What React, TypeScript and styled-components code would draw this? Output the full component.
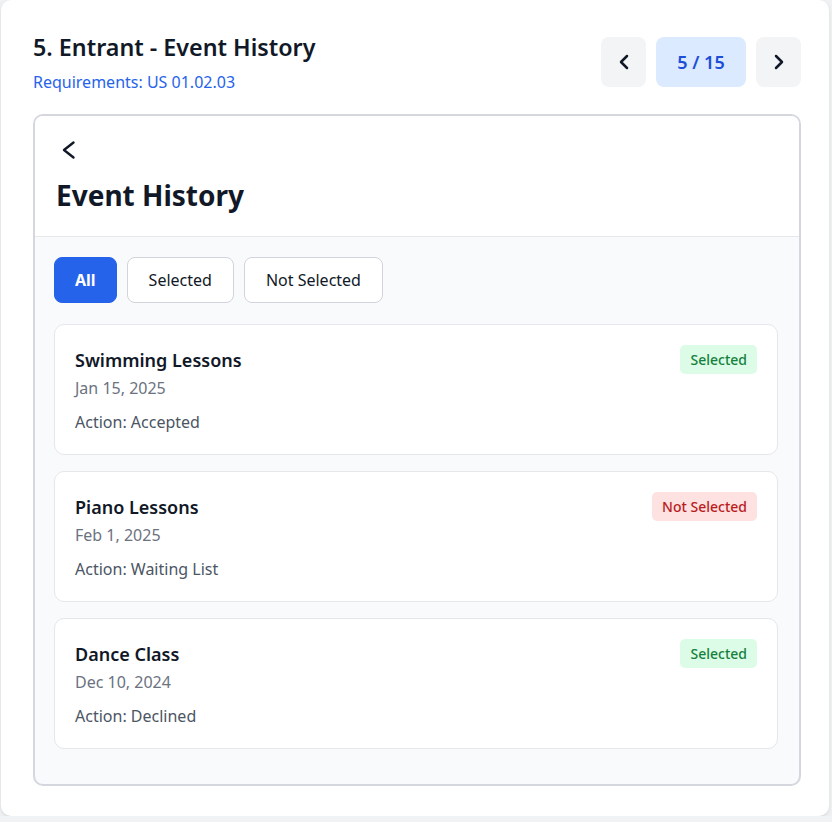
import styled, { createGlobalStyle } from "styled-components";

const GlobalStyle = createGlobalStyle`
  html, body {
    margin: 0;
    padding: 0;
    background: #f1f2f4;
  }
  body {
    font-family: "Noto Sans", "Open Sans", sans-serif;
    color: #111827;
  }
  * {
    box-sizing: border-box;
  }
`;

const Sheet = styled.div`
  width: 828px;
  height: 816px;
  margin-left: 1px;
  padding: 31px 28px 30px 32px;
  background: #ffffff;
  border-radius: 10px;
  box-shadow: 0 2px 6px rgba(0, 0, 0, 0.08), 0 1px 2px rgba(0, 0, 0, 0.05);
`;

const TopBar = styled.div`
  display: flex;
  justify-content: space-between;
  align-items: flex-start;
  margin-bottom: 20px;
`;

const Heading = styled.h1`
  margin: 0;
  font-size: 23.3px;
  line-height: 32px;
  font-weight: 600;
  color: #111827;
`;

const Requirements = styled.div`
  margin-top: 7px;
  font-size: 16px;
  line-height: 24px;
  color: #2563eb;
`;

const Pager = styled.div`
  display: flex;
  gap: 10px;
  margin-top: 6px;
`;

const PagerButton = styled.button<{ $current?: boolean }>`
  display: flex;
  align-items: center;
  justify-content: center;
  height: 50px;
  width: ${(p) => (p.$current ? "90px" : "45px")};
  padding: 0;
  border: none;
  border-radius: 8px;
  background: ${(p) => (p.$current ? "#dbeafe" : "#f3f4f6")};
  color: ${(p) => (p.$current ? "#1d4ed8" : "#111827")};
  font-family: inherit;
  font-size: 18px;
  font-weight: 600;
`;

const Frame = styled.div`
  border: 2px solid #d4d7dd;
  border-radius: 10px;
  overflow: hidden;
  background: #f9fafb;
`;

const FrameHeader = styled.div`
  background: #ffffff;
  border-bottom: 1px solid #e5e7eb;
  padding: 23px 20px 23px;
`;

const BackButton = styled.button`
  display: block;
  width: 24px;
  height: 24px;
  padding: 0;
  border: none;
  background: none;
  color: #111827;
`;

const ScreenTitle = styled.h2`
  margin: 14px 0 0 1px;
  font-size: 28px;
  line-height: 36px;
  font-weight: 700;
  color: #111827;
`;

const FrameBody = styled.div`
  padding: 20px 21px 35px 19px;
`;

const Filters = styled.div`
  display: flex;
  gap: 10px;
  margin-bottom: 21px;
`;

const FilterButton = styled.button<{ $active?: boolean }>`
  height: 46px;
  padding: 0 ${(p) => (p.$active ? "20px" : "21px")};
  border: 1px solid ${(p) => (p.$active ? "#2563eb" : "#d1d5db")};
  border-radius: 8px;
  background: ${(p) => (p.$active ? "#2563eb" : "#ffffff")};
  color: ${(p) => (p.$active ? "#ffffff" : "#111827")};
  font-family: inherit;
  font-size: 16px;
  line-height: 24px;
  font-weight: ${(p) => (p.$active ? 700 : 400)};
`;

const List = styled.div`
  display: flex;
  flex-direction: column;
  gap: 16px;
`;

const EventCard = styled.div`
  background: #ffffff;
  border: 1px solid #e5e7eb;
  border-radius: 10px;
  padding: 20px;
`;

const CardTop = styled.div`
  display: flex;
  justify-content: space-between;
  align-items: flex-start;
`;

const EventName = styled.div`
  padding-top: 1px;
  font-size: 18px;
  line-height: 28px;
  font-weight: 600;
  color: #111827;
`;

const EventDate = styled.div`
  margin-top: 2px;
  font-size: 16px;
  line-height: 24px;
  color: #6b7280;
`;

const EventAction = styled.div`
  margin-top: 10px;
  font-size: 16px;
  line-height: 24px;
  color: #4b5563;
`;

const Badge = styled.span<{ $tone: "good" | "bad" }>`
  display: inline-block;
  padding: 4px 10px;
  border-radius: 5px;
  font-size: 14px;
  line-height: 21px;
  font-weight: 500;
  background: ${(p) => (p.$tone === "good" ? "#dcfce7" : "#fee2e2")};
  color: ${(p) => (p.$tone === "good" ? "#15803d" : "#b91c1c")};
`;

const Chevron = ({ dir, size = 24 }: { dir: "left" | "right"; size?: number }) => (
  <svg
    width={size}
    height={size}
    viewBox="0 0 24 24"
    fill="none"
    stroke="currentColor"
    strokeWidth={2.5}
    strokeLinecap="round"
    strokeLinejoin="round"
  >
    <path d={dir === "left" ? "M15 18l-6-6 6-6" : "M9 18l6-6-6-6"} />
  </svg>
);

const BackIcon = () => (
  <svg width="20" height="20" viewBox="0 0 20 20" fill="none" stroke="currentColor" strokeWidth={2.4} strokeLinecap="round" strokeLinejoin="round" style={{ margin: "1px 0 0 4px" }}>
    <path d="M14.5 2.5L5 10l9.5 7.5" />
  </svg>
);

const events = [
  { name: "Swimming Lessons", date: "Jan 15, 2025", action: "Accepted", selected: true },
  { name: "Piano Lessons", date: "Feb 1, 2025", action: "Waiting List", selected: false },
  { name: "Dance Class", date: "Dec 10, 2024", action: "Declined", selected: true },
];

export default function App() {
  return (
    <>
      <GlobalStyle />
      <Sheet>
        <TopBar>
          <div>
            <Heading>5. Entrant - Event History</Heading>
            <Requirements>Requirements: US 01.02.03</Requirements>
          </div>
          <Pager>
            <PagerButton aria-label="Previous">
              <Chevron dir="left" />
            </PagerButton>
            <PagerButton $current>5 / 15</PagerButton>
            <PagerButton aria-label="Next">
              <Chevron dir="right" />
            </PagerButton>
          </Pager>
        </TopBar>
        <Frame>
          <FrameHeader>
            <BackButton aria-label="Back">
              <BackIcon />
            </BackButton>
            <ScreenTitle>Event History</ScreenTitle>
          </FrameHeader>
          <FrameBody>
            <Filters>
              <FilterButton $active>All</FilterButton>
              <FilterButton>Selected</FilterButton>
              <FilterButton>Not Selected</FilterButton>
            </Filters>
            <List>
              {events.map((e) => (
                <EventCard key={e.name}>
                  <CardTop>
                    <div>
                      <EventName>{e.name}</EventName>
                      <EventDate>{e.date}</EventDate>
                    </div>
                    <Badge $tone={e.selected ? "good" : "bad"}>
                      {e.selected ? "Selected" : "Not Selected"}
                    </Badge>
                  </CardTop>
                  <EventAction>Action: {e.action}</EventAction>
                </EventCard>
              ))}
            </List>
          </FrameBody>
        </Frame>
      </Sheet>
    </>
  );
}
